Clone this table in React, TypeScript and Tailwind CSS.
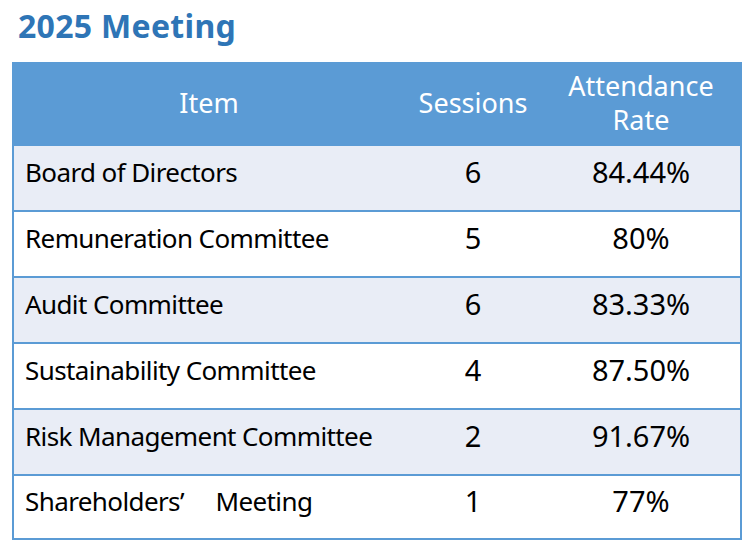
const rows = [
  { item: "Board of Directors", sessions: "6", rate: "84.44%" },
  { item: "Remuneration Committee", sessions: "5", rate: "80%" },
  { item: "Audit Committee", sessions: "6", rate: "83.33%" },
  { item: "Sustainability Committee", sessions: "4", rate: "87.50%" },
  { item: "Risk Management Committee", sessions: "2", rate: "91.67%" },
  { item: "Shareholders’\u2003 Meeting", sessions: "1", rate: "77%" },
];

const App = () => {
  return (
    <div
      className="w-[744px] h-[542px] bg-white text-black"
      style={{ fontFamily: '"Noto Sans", "Open Sans", sans-serif' }}
    >
      <h1 className="h-[62px] pl-[18px] pt-[5px] text-[32px] font-bold leading-[42px] tracking-[0.3px] text-[#2e75b6]">
        2025 Meeting
      </h1>

      <div className="ml-[12px] w-[730px] border-x-2 border-[#5b9bd5]">
        {/* header */}
        <div className="grid h-[82px] grid-cols-[390px_138px_1fr] items-center bg-[#5b9bd5] text-[27px] leading-[34px] text-white">
          <div className="text-center">Item</div>
          <div className="text-center">Sessions</div>
          <div className="text-center">
            Attendance
            <br />
            Rate
          </div>
        </div>

        {rows.map((r, i) => (
          <div
            key={r.item}
            className={`grid h-[66px] grid-cols-[390px_138px_1fr] items-center border-t-2 border-[#5b9bd5] pb-[12px] ${
              i % 2 === 0 ? "bg-[#e9edf6]" : "bg-white"
            } ${i === rows.length - 1 ? "border-b-2" : ""}`}
          >
            <div className="pl-[11px] whitespace-pre text-[26px] tracking-[-0.6px]">
              {r.item}
            </div>
            <div className="text-center text-[29px]">{r.sessions}</div>
            <div className="text-center text-[29px]">{r.rate}</div>
          </div>
        ))}
      </div>
    </div>
  );
};

export default App;
